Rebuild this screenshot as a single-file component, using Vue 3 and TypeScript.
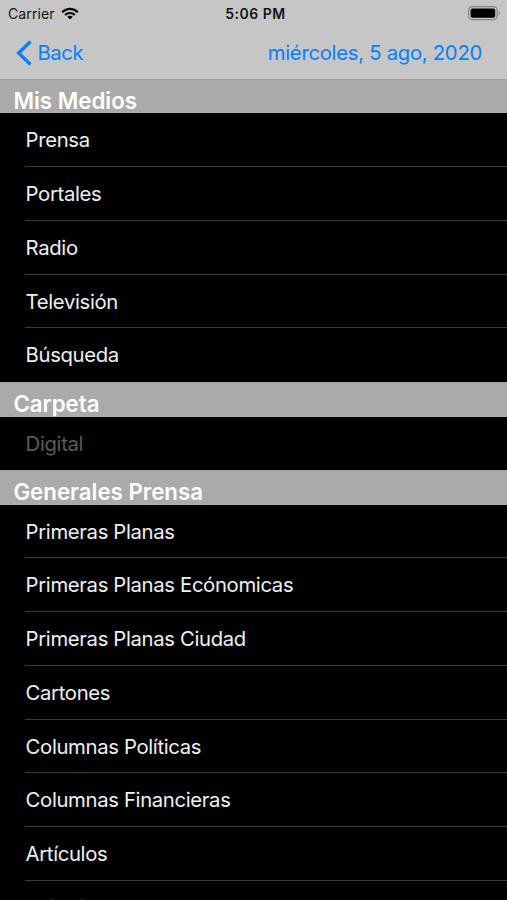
<script setup lang="ts">
interface Row {
  label: string
  disabled?: boolean
}
interface Section {
  title: string
  rows: Row[]
}

const sections: Section[] = [
  {
    title: 'Mis Medios',
    rows: [
      { label: 'Prensa' },
      { label: 'Portales' },
      { label: 'Radio' },
      { label: 'Televisión' },
      { label: 'Búsqueda' },
    ],
  },
  { title: 'Carpeta', rows: [{ label: 'Digital', disabled: true }] },
  {
    title: 'Generales Prensa',
    rows: [
      { label: 'Primeras Planas' },
      { label: 'Primeras Planas Ecónomicas' },
      { label: 'Primeras Planas Ciudad' },
      { label: 'Cartones' },
      { label: 'Columnas Políticas' },
      { label: 'Columnas Financieras' },
      { label: 'Artículos' },
      { label: 'Editoriales' },
    ],
  },
]
</script>

<template>
  <div class="screen">
    <header class="top">
      <div class="status">
        <div class="carrier">
          <span>Carrier</span>
          <svg class="wifi" width="18" height="13" viewBox="0 0 18 13">
            <g fill="none" stroke="#080808" stroke-width="2.2">
              <path d="M1.2 5.2C5.6.7 12.4.7 16.8 5.2" />
              <path d="M4.1 8C6.9 5.3 11.1 5.3 13.9 8" />
            </g>
            <path d="M9 12.4 6.2 9.7C7.8 8.3 10.2 8.3 11.8 9.7Z" fill="#080808" />
          </svg>
        </div>
        <span class="clock">5:06 PM</span>
        <svg class="battery" width="33" height="15" viewBox="0 0 33 15">
          <rect x=".7" y=".7" width="28.4" height="13" rx="3.6" fill="none" stroke="#858585" stroke-width="1.2" />
          <rect x="2.6" y="2.6" width="24.6" height="9.2" rx="1.8" fill="#000" />
          <path d="M30.5 5v4.4c1.8-.8 1.8-3.6 0-4.4Z" fill="#858585" />
        </svg>
      </div>
      <nav class="nav">
        <button class="back">
          <svg width="16" height="26" viewBox="0 0 16 26">
            <path d="M14.5 1.5 2.6 13 14.5 24.5" fill="none" stroke="#087ffb" stroke-width="3.3" />
          </svg>
          <span>Back</span>
        </button>
        <span class="date">miércoles, 5 ago, 2020</span>
      </nav>
    </header>
    <main>
      <section v-for="section in sections" :key="section.title">
        <h2 class="heading">{{ section.title }}</h2>
        <ul class="rows">
          <li v-for="row in section.rows" :key="row.label" class="row" :class="{ disabled: row.disabled }">
            {{ row.label }}
          </li>
        </ul>
      </section>
    </main>
  </div>
</template>

<style>
body {
  margin: 0;
  background: #000;
}
</style>

<style scoped>
.screen {
  width: 507px;
  height: 900px;
  overflow: hidden;
  background: #000;
  font-family: Inter, "Liberation Sans", sans-serif;
}
.top {
  box-sizing: border-box;
  height: 79.1px;
  background: #c6c6c6;
  color: #087ffb;
}
.status {
  display: grid;
  grid-template-columns: 1fr auto 1fr;
  align-items: center;
  height: 27px;
  padding: 0 6px 0 8px;
  color: #141414;
  font-size: 14px;
}
.carrier {
  display: flex;
  align-items: center;
  gap: 6.5px;
  letter-spacing: 0.1px;
}
.clock {
  padding-left: 2px;
  font-weight: 600;
  letter-spacing: 0.5px;
}
.battery {
  justify-self: end;
}
.nav {
  display: flex;
  align-items: center;
  justify-content: space-between;
  height: 51px;
  padding: 0 25px 0 16px;
  font-size: 20.3px;
  letter-spacing: -0.28px;
}
.back {
  display: flex;
  align-items: center;
  gap: 5.5px;
  padding: 0;
  border: 0;
  background: none;
  color: inherit;
  font: inherit;
  letter-spacing: -0.4px;
}
.heading {
  box-sizing: border-box;
  height: 34.3px;
  margin: 0;
  padding: 7.5px 0 0 13.4px;
  border-top: 1px solid #a0a0a0;
  background: #aaa;
  color: #fff;
  font-size: 22.3px;
  font-weight: 600;
  line-height: 26px;
  white-space: nowrap;
}
.rows {
  margin: 0;
  padding: 0 0 0 25px;
  list-style: none;
}
.row {
  box-sizing: border-box;
  height: 53.78px;
  padding-left: 0.6px;
  border-bottom: 1px solid #3c3c3c;
  color: #f0f0f0;
  font-size: 20.3px;
  letter-spacing: -0.34px;
  line-height: 54.4px;
  white-space: nowrap;
}
.row:last-child {
  border-bottom-color: transparent;
}
.disabled {
  color: #5a5a5a;
}
</style>
